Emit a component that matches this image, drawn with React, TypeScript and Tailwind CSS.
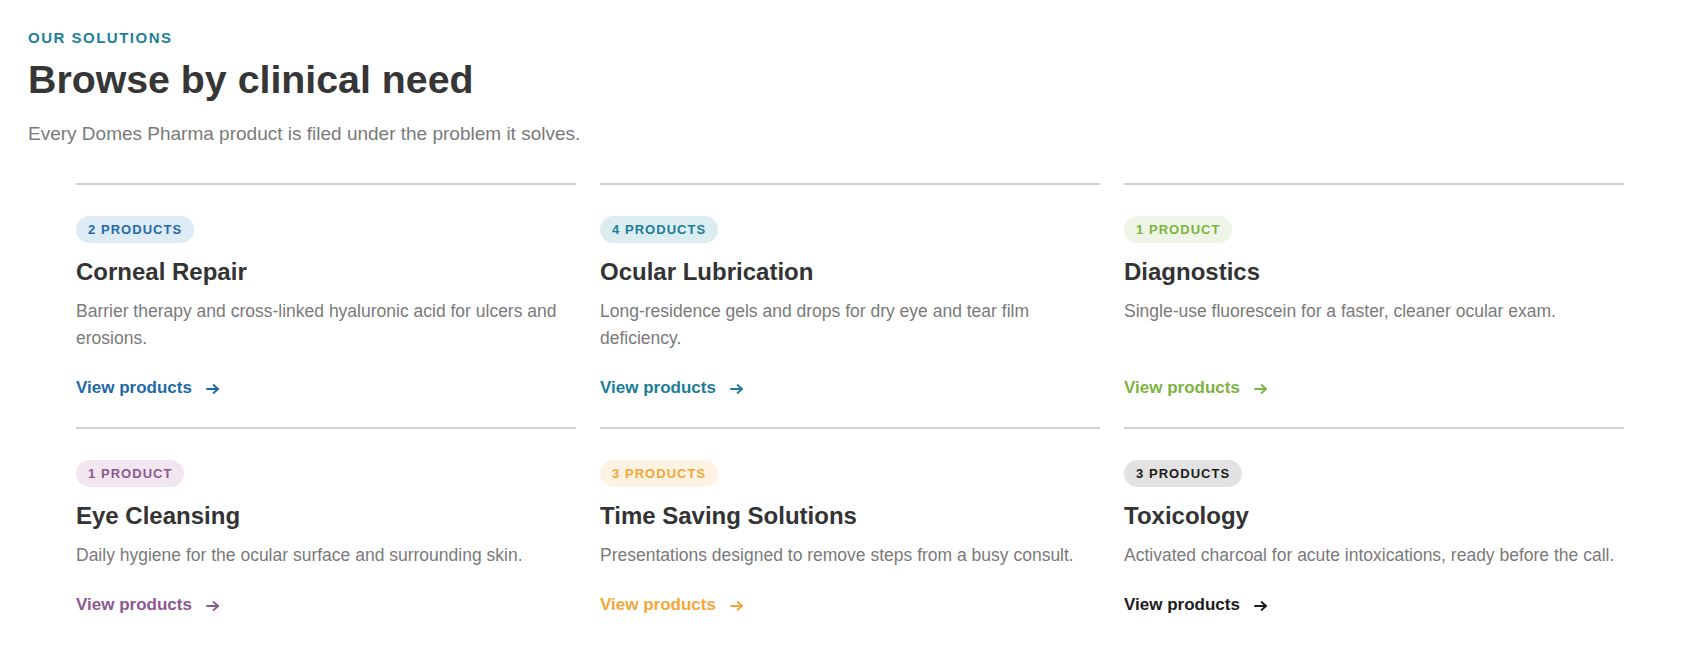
import React from "react";

type Category = {
  count: string;
  title: string;
  description: string;
  badge: string;
  accent: string;
};

// Each category carries its own accent for the badge and the link.
const categories: Category[] = [
  {
    count: "2 Products",
    title: "Corneal Repair",
    description:
      "Barrier therapy and cross-linked hyaluronic acid for ulcers and erosions.",
    badge: "bg-[#deebf5] text-[#1e6aa8]",
    accent: "text-[#1e6aa8]",
  },
  {
    count: "4 Products",
    title: "Ocular Lubrication",
    description:
      "Long-residence gels and drops for dry eye and tear film deficiency.",
    badge: "bg-[#dcedf1] text-[#1b7d97]",
    accent: "text-[#1b7d97]",
  },
  {
    count: "1 Product",
    title: "Diagnostics",
    description: "Single-use fluorescein for a faster, cleaner ocular exam.",
    badge: "bg-[#eef5e6] text-[#7db340]",
    accent: "text-[#7db340]",
  },
  {
    count: "1 Product",
    title: "Eye Cleansing",
    description: "Daily hygiene for the ocular surface and surrounding skin.",
    badge: "bg-[#f2e6f0] text-[#8d5890]",
    accent: "text-[#8d5890]",
  },
  {
    count: "3 Products",
    title: "Time Saving Solutions",
    description:
      "Presentations designed to remove steps from a busy consult.",
    badge: "bg-[#fef3e2] text-[#f2a73a]",
    accent: "text-[#f2a73a]",
  },
  {
    count: "3 Products",
    title: "Toxicology",
    description:
      "Activated charcoal for acute intoxications, ready before the call.",
    badge: "bg-[#e2e2e2] text-[#1c1c1c]",
    accent: "text-[#1c1c1c]",
  },
];

function ArrowRight() {
  return (
    <svg
      width="13"
      height="10"
      viewBox="0 0 13 10"
      fill="none"
      stroke="currentColor"
      strokeWidth="1.8"
      strokeLinecap="round"
      strokeLinejoin="round"
      className="translate-y-[1px]"
    >
      <path d="M1 5h11" />
      <path d="M7.6 1 12 5 7.6 9" />
    </svg>
  );
}

function CategoryCard({ item }: { item: Category }) {
  return (
    <article className="flex flex-col border-t-2 border-[#d1d1d1] pt-[31px] pb-[27px]">
      <div>
        <span
          className={`inline-block rounded-full px-3 py-1 text-[13px] font-bold uppercase leading-[19px] tracking-[0.08em] ${item.badge}`}
        >
          {item.count}
        </span>
      </div>
      <h3 className="mt-[14px] text-[24px] font-bold leading-[30px] text-[#333333]">
        {item.title}
      </h3>
      <p className="mt-[11px] mb-6 text-[17.5px] leading-[27px] text-[#7a7a7a]">
        {item.description}
      </p>
      <a
        href="#"
        className={`mt-auto flex items-center gap-[14px] self-start text-[17px] font-bold leading-6 ${item.accent}`}
      >
        <span>View products</span>
        <ArrowRight />
      </a>
    </article>
  );
}

export default function App() {
  return (
    <main className="min-h-screen bg-white font-['Liberation_Sans',Arial,sans-serif]">
      <section className="px-7 pt-7">
        <p className="text-[15px] font-bold uppercase leading-5 tracking-[0.1em] text-[#1f7f9a]">
          Our Solutions
        </p>
        <h2 className="mt-2 text-[39.3px] font-bold leading-[47px] text-[#363636]">
          Browse by clinical need
        </h2>
        <p className="mt-[17px] text-[19px] leading-[28px] text-[#7a7a7a]">
          Every Domes Pharma product is filed under the problem it solves.
        </p>
        <div className="mx-12 mt-[35px] grid grid-cols-3 gap-x-6">
          {categories.map((item) => (
            <CategoryCard key={item.title} item={item} />
          ))}
        </div>
      </section>
    </main>
  );
}
